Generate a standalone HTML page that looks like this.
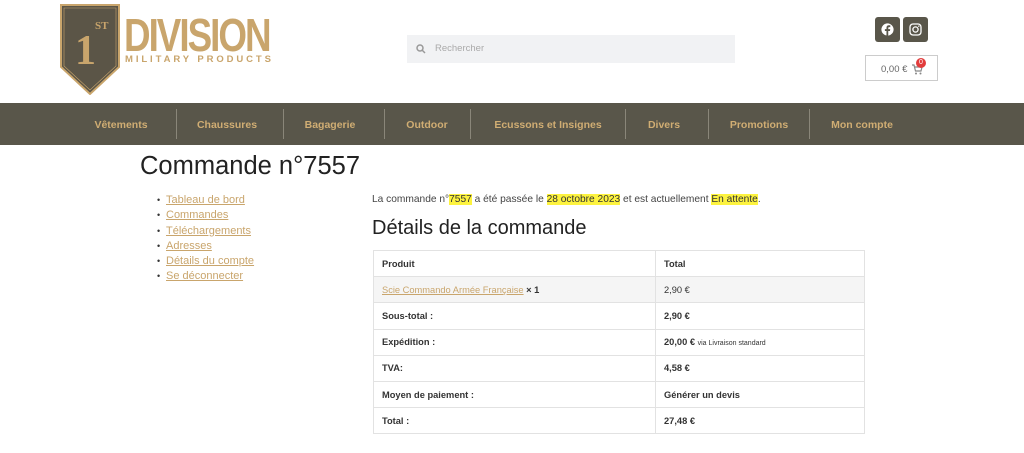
<!DOCTYPE html>
<html><head><meta charset="utf-8"><style>
*{margin:0;padding:0;box-sizing:border-box}
body{width:1024px;height:453px;background:#fff;font-family:"Liberation Sans",sans-serif;position:relative;overflow:hidden;color:#333}
.a{position:absolute}
.nav{left:0;top:103px;width:1024px;height:42px;background:#59564a}
.nav span{position:absolute;top:1px;line-height:42px;color:#d0ad73;font-weight:bold;font-size:10.5px;transform:translateX(-50%);white-space:nowrap}
.nav i{position:absolute;top:6px;height:30px;width:1px;background:#8a8679}
ul{list-style:none}
.menu li{font-size:11px;line-height:15.3px;color:#c9a56c;text-decoration:underline}
.menu li:before{content:"•";color:#333;text-decoration:none;display:inline-block;width:9px;font-size:9px}
table{border-collapse:collapse;width:492px;font-size:9.3px}
td{border:1px solid #e2e2e2;height:26.2px;padding:0 8px;font-weight:bold;color:#333}
td.n{font-weight:normal}
mark{background:#fdf33f;color:#333}
</style></head><body>
<svg class="a" style="left:60px;top:4px" width="60" height="91" viewBox="0 0 60 91">
<path d="M1 1H59V63L30 90L1 63Z" fill="#5b5547" stroke="#c9a56c" stroke-width="2"/>
<path d="M4 4H56V62L30 86L4 62Z" fill="none" stroke="#c9a56c" stroke-width="0.6"/>
<text x="15" y="60" font-family="Liberation Serif" font-weight="bold" font-size="42" fill="#c9a56c">1</text>
<text x="35" y="25" font-family="Liberation Serif" font-weight="bold" font-size="11" fill="#c9a56c">ST</text>
</svg>
<div class="a" style="left:124px;top:8px;font-family:'Liberation Sans';font-weight:bold;font-size:46px;color:#c9a56c;letter-spacing:-2.5px;transform:scaleX(0.8);transform-origin:0 0;white-space:nowrap">DIVISION</div>
<div class="a" style="left:125px;top:54px;font-weight:bold;font-size:9.5px;color:#c9a56c;letter-spacing:2.9px;white-space:nowrap">MILITARY PRODUCTS</div>
<div class="a" style="left:407px;top:35px;width:328px;height:28px;background:#f1f2f4"></div>
<svg class="a" style="left:416px;top:44px" width="10" height="10"><circle cx="4" cy="4" r="3" fill="none" stroke="#999" stroke-width="1.5"/><path d="M6 6L9 9" stroke="#999" stroke-width="1.5"/></svg>
<div class="a" style="left:435px;top:43px;font-size:9.5px;color:#aaa">Rechercher</div>
<div class="a" style="left:875px;top:17px;width:25px;height:25px;background:#59564a;border-radius:3px"></div>
<svg class="a" style="left:880px;top:22px" width="15" height="15" viewBox="0 0 16 16"><circle cx="8" cy="8" r="6.5" fill="#fff"/><path d="M8.8 15V9.6H10.6L10.9 7.6H8.8V6.4C8.8 5.8 9 5.4 9.9 5.4H11V3.6C10.6 3.5 10 3.5 9.4 3.5C7.9 3.5 6.9 4.4 6.9 6V7.6H5.2V9.6H6.9V15Z" fill="#59564a"/></svg>
<div class="a" style="left:903px;top:17px;width:25px;height:25px;background:#59564a;border-radius:3px"></div>
<svg class="a" style="left:909px;top:23px" width="13" height="13"><rect x="1" y="1" width="11" height="11" rx="3" fill="none" stroke="#fff" stroke-width="1.3"/><circle cx="6.5" cy="6.5" r="2.6" fill="none" stroke="#fff" stroke-width="1.3"/><circle cx="9.8" cy="3.2" r=".7" fill="#fff"/></svg>
<div class="a" style="left:865px;top:55px;width:73px;height:26px;border:1px solid #ccc"></div>
<div class="a" style="left:881px;top:64px;font-size:9.5px;color:#666">0,00 €</div>
<svg class="a" style="left:911px;top:63px" width="12" height="12"><path d="M1 2H3L4.5 8H10L11 4H4" fill="none" stroke="#888" stroke-width="1.2"/><circle cx="5" cy="10.5" r="1" fill="#888"/><circle cx="9.5" cy="10.5" r="1" fill="#888"/></svg>
<div class="a" style="left:916px;top:58px;width:10px;height:10px;border-radius:50%;background:#e23c3c;color:#fff;font-size:7px;text-align:center;line-height:10px">0</div>
<div class="a nav">
<span style="left:121px">Vêtements</span><i style="left:176px"></i>
<span style="left:227px">Chaussures</span><i style="left:283px"></i>
<span style="left:330px">Bagagerie</span><i style="left:384px"></i>
<span style="left:427px">Outdoor</span><i style="left:470px"></i>
<span style="left:548px">Ecussons et Insignes</span><i style="left:625px"></i>
<span style="left:664px">Divers</span><i style="left:708px"></i>
<span style="left:759px">Promotions</span><i style="left:809px"></i>
<span style="left:862px">Mon compte</span>
</div>
<div class="a" style="left:140px;top:152px;font-size:25.5px;color:#222">Commande n°7557</div>
<ul class="a menu" style="left:157px;top:193px">
<li>Tableau de bord</li><li>Commandes</li><li>Téléchargements</li><li>Adresses</li><li>Détails du compte</li><li>Se déconnecter</li></ul>
<div class="a" style="left:372px;top:194px;font-size:10.2px;color:#444">La commande n°<mark>7557</mark> a été passée le <mark>28 octobre 2023</mark> et est actuellement <mark>En attente</mark>.</div>
<div class="a" style="left:372px;top:217px;font-size:20px;color:#222">Détails de la commande</div>
<table class="a" style="left:373px;top:250px">
<tr><td style="width:282px">Produit</td><td>Total</td></tr>
<tr style="background:#f5f5f5"><td class="n"><span style="color:#c9a56c;text-decoration:underline">Scie Commando Armée Française</span> <b>× 1</b></td><td class="n">2,90 €</td></tr>
<tr><td>Sous-total :</td><td>2,90 €</td></tr>
<tr><td>Expédition :</td><td>20,00 € <small style="font-weight:normal;font-size:7px">via Livraison standard</small></td></tr>
<tr><td>TVA:</td><td>4,58 €</td></tr>
<tr><td>Moyen de paiement :</td><td>Générer un devis</td></tr>
<tr><td>Total :</td><td>27,48 €</td></tr>
</table>
</body></html>
